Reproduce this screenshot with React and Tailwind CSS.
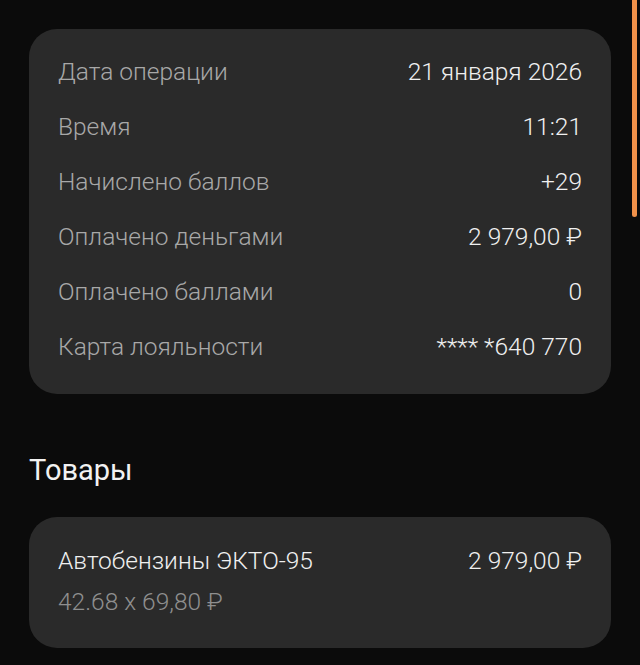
const rows = [
  ["Дата операции", "21 января 2026"],
  ["Время", "11:21"],
  ["Начислено баллов", "+29"],
  ["Оплачено деньгами", "2 979,00 ₽"],
  ["Оплачено баллами", "0"],
  ["Карта лояльности", "**** *640 770"],
];

export default function App() {
  return (
    <div
      className="relative min-h-[665px] w-[640px] overflow-hidden bg-[#0b0b0b] px-[29px] pt-[29px]"
      style={{ fontFamily: "Roboto, 'Noto Sans', sans-serif" }}
    >
      <div className="flex flex-col rounded-[28px] bg-[#2a2a2a] px-[29px] pb-[19px] pt-[16px]">
        {rows.map(([label, value]) => (
          <div key={label} className="flex h-[55px] items-center justify-between text-[24.5px] font-light">
            <span className="text-[#a8a8a8]">{label}</span>
            <span className="text-[#f0f0f0]">{value}</span>
          </div>
        ))}
      </div>

      <h2 className="mt-[58px] text-[29px] leading-[36px] text-[#f2f2f2]">Товары</h2>

      <div className="mt-[29px] flex flex-col rounded-[28px] bg-[#2a2a2a] px-[29px] pb-[31px] pt-[29px]">
        <div className="flex h-[30px] items-center justify-between text-[24.5px] font-light text-[#f0f0f0]">
          <span>Автобензины ЭКТО-95</span>
          <span>2 979,00 ₽</span>
        </div>
        <div className="mt-[11px] flex h-[30px] items-center text-[24.5px] font-light text-[#8f8f8f]">
          42.68 x 69,80 ₽
        </div>
      </div>

      <div className="absolute right-[3px] top-0 h-[217px] w-[5px] rounded-b-full bg-[#f0914a]" />
    </div>
  );
}
